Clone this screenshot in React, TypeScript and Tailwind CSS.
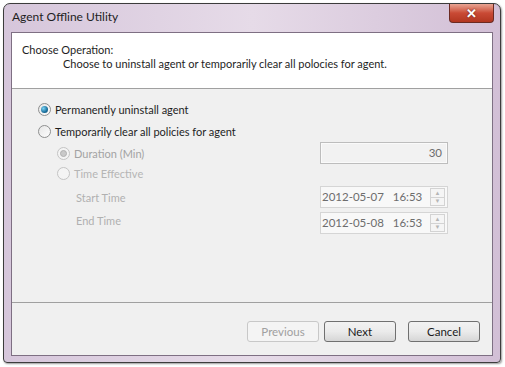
import React from 'react';

const FONT = { fontFamily: 'Lato, "Open Sans", sans-serif' };

function Radio({ checked, disabled }: { checked?: boolean; disabled?: boolean }) {
  return (
    <span
      className={
        'relative inline-flex h-[13px] w-[13px] shrink-0 items-center justify-center rounded-full border ' +
        (disabled ? 'border-[#c4c4c4] bg-[#f4f4f4]' : 'border-[#8e8f8f] bg-gradient-to-br from-[#e6e6e6] to-[#fdfdfd]')
      }
    >
      {checked && (
        <span
          className={
            'h-[7px] w-[7px] rounded-full ' +
            (disabled ? 'bg-[#c9c9c9] border border-[#b0b0b0]' : 'bg-[radial-gradient(circle_at_35%_35%,#7ad3f5,#1a6f9c_60%,#0d4a6e)]')
          }
        />
      )}
    </span>
  );
}

function Spin() {
  return (
    <span className="ml-auto mr-[2px] flex h-[18px] w-[15px] flex-col">
      <span className="flex flex-1 items-center justify-center border border-[#d3d3d3] bg-[#f5f5f5] text-[6px] leading-none text-[#b6b6b6]">
        ▲
      </span>
      <span className="flex flex-1 items-center justify-center border border-t-0 border-[#d3d3d3] bg-[#f5f5f5] text-[6px] leading-none text-[#b6b6b6]">
        ▼
      </span>
    </span>
  );
}

function DateField({ value }: { value: string }) {
  return (
    <div className="flex h-[22px] w-[128px] items-center border border-[#d5d5d5] bg-[#f8f8f8] text-[11.5px] text-[#6d6d6d]">
      <span className="pl-[1px] whitespace-pre">{value}</span>
      <Spin />
    </div>
  );
}

function Button({ label, disabled }: { label: string; disabled?: boolean }) {
  return (
    <div
      className={
        'flex h-[21px] w-[72px] items-center justify-center rounded-[3px] border text-[11.5px] ' +
        (disabled
          ? 'border-[#c8c8c8] bg-[#f4f4f4] text-[#a0a0a0]'
          : 'border-[#707070] bg-gradient-to-b from-[#f2f2f2] via-[#ebebeb] to-[#d6d6d6] text-[#1a1a1a]')
      }
    >
      {label}
    </div>
  );
}

export default function App() {
  return (
    <div className="h-[367px] w-[505px] bg-white p-[3px] pb-[4px] pr-[4px]" style={FONT}>
      <div className="flex h-full w-full flex-col rounded-t-[7px] rounded-b-[4px] border border-[#3c3c3c] bg-gradient-to-r from-[#d6c6db] via-[#e6dbe8] to-[#d2bfd6] px-[7px] pb-[6px] shadow-[1px_1px_2px_rgba(0,0,0,0.4)]">
        <div className="flex h-[28px] items-start">
          <span className="pl-[1px] pt-[7px] text-[12px] leading-none text-[#1e1e1e]">Agent Offline Utility</span>
          <div className="ml-auto mr-[-1px] flex h-[19px] w-[45px] items-center justify-center rounded-b-[4px] border border-t-0 border-[#6b2a22] bg-gradient-to-b from-[#e8a493] via-[#c94a35] to-[#b23620]">
            <span className="text-[13px] font-bold leading-none text-white [text-shadow:0_0_2px_#5a1a10]">✕</span>
          </div>
        </div>
        <div className="flex flex-1 flex-col border border-[#7e6f83] bg-[#f0f0f0]">
          <div className="h-[56px] border-b border-[#a0a0a0] bg-white pl-[10px] pt-[10px] text-[11px] leading-[14px] text-[#1e1e1e]">
            <div className="h-[14px]">Choose Operation:</div>
            <div className="h-[14px] pl-[41px]">Choose to uninstall agent or temporarily clear all polocies for agent.</div>
          </div>
          <div className="flex flex-1 flex-col border-b border-[#a0a0a0] pl-[26px] pr-[44px] pt-[11px] text-[11px] leading-none">
            <div className="flex h-[18px] items-center gap-[4px] text-[#1e1e1e]">
              <Radio checked />
              <span>Permanently uninstall agent</span>
            </div>
            <div className="mt-[4px] flex h-[18px] items-center gap-[4px] text-[#1e1e1e]">
              <Radio />
              <span>Temporarily clear all policies for agent</span>
            </div>
            <div className="mt-[4px] flex h-[18px] items-center pl-[19px] text-[#a3a3a3]">
              <Radio checked disabled />
              <span className="ml-[4px]">Duration (Min)</span>
              <div className="ml-auto flex h-[22px] w-[128px] items-center justify-end border border-[#bdbdbd] bg-[#f2f2f2] pr-[5px] text-[11.5px] text-[#6d6d6d] shadow-[inset_0_0_0_1px_#fafafa]">
                30
              </div>
            </div>
            <div className="mt-[2px] flex h-[18px] items-center pl-[19px] text-[#b5b5b5]">
              <Radio disabled />
              <span className="ml-[4px]">Time Effective</span>
            </div>
            <div className="mt-[4px] flex h-[22px] items-center pl-[38px] text-[#b0b0b0]">
              <span>Start Time</span>
              <div className="ml-auto">
                <DateField value="2012-05-07   16:53" />
              </div>
            </div>
            <div className="mt-[4px] flex h-[22px] items-center pl-[38px] text-[#b0b0b0]">
              <span className="relative top-[-3px]">End Time</span>
              <div className="ml-auto">
                <DateField value="2012-05-08   16:53" />
              </div>
            </div>
          </div>
          <div className="flex h-[52px] items-start pr-[12px] pt-[18px]">
            <div className="ml-auto flex gap-[5px]">
              <Button label="Previous" disabled />
              <Button label="Next" />
            </div>
            <div className="ml-[12px]">
              <Button label="Cancel" />
            </div>
          </div>
        </div>
      </div>
    </div>
  );
}
